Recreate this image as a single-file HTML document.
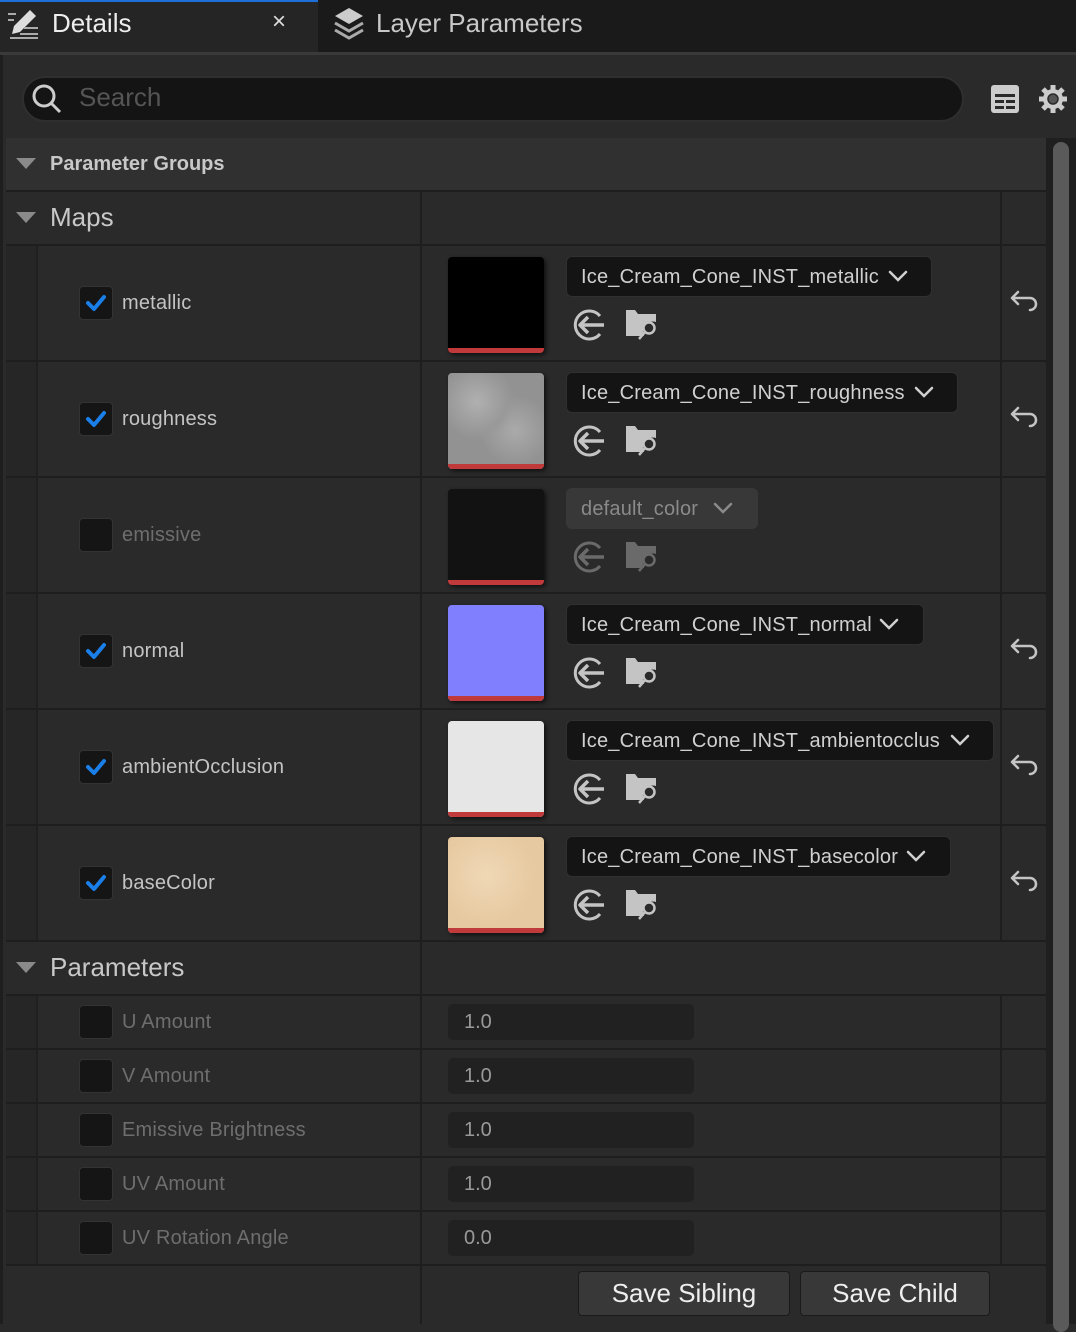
<!DOCTYPE html>
<html><head><meta charset="utf-8"><style>
*{margin:0;padding:0;box-sizing:border-box}
body{width:1076px;height:1324px;background:#2a2a2a;font-family:"Liberation Sans",sans-serif;color:#c0c0c0;position:relative;overflow:hidden}
.a{position:absolute}
.ind{position:absolute;left:6px;width:30px;background:#262626}
.cb{position:absolute;left:79px;width:34px;height:34px;background:#151515;border:1px solid #333;border-radius:4px}
.lbl{position:absolute;left:122px;font-size:20px;color:#c4c4c4;letter-spacing:0.2px}
.dim{color:#6e6e6e}
.th{position:absolute;left:448px;width:96px;height:96px;border-radius:4px;overflow:hidden;box-shadow:2px 2px 4px #111}
.th:after{content:"";position:absolute;left:0;right:0;bottom:0;height:5px;background:#c0393b}
.dd{position:absolute;left:566px;height:41px;background:#141414;border:1px solid #303030;border-radius:6px;font-size:20px;padding:9px 0 0 14px;color:#d0d0d0;white-space:nowrap;overflow:hidden;letter-spacing:0.2px}
.hl{position:absolute;height:2px;left:6px;width:1040px;background:#1e1e1e}
.num{position:absolute;left:448px;width:246px;height:36px;background:#212121;border-radius:5px;font-size:20px;color:#9a9a9a;padding:7px 0 0 16px}
.btn{position:absolute;top:1271px;height:45px;background:#383838;border:1px solid #1a1a1a;border-radius:4px;font-size:26px;color:#eee;text-align:center;padding-top:6px}
</style></head><body>
<div class="a" style="left:0;top:0;width:1076px;height:52px;background:#1a1a1a"></div>
<div class="a" style="left:0;top:0;width:318px;height:52px;background:#252525;border-top:2px solid #1e6fd9"></div>
<svg class="a" style="left:6px;top:6px" width="36" height="34" viewBox="0 0 36 34"><path d="M6 28 L8 20 L24 4 L30 10 L14 26 Z" fill="#ddd"/><path d="M2 8h8M2 14h6M18 22h14M14 28h18M4 32h28" stroke="#aaa" stroke-width="2"/></svg>
<div class="a" style="left:52px;top:8px;font-size:26px;color:#eee">Details</div>
<div class="a" style="left:272px;top:8px;font-size:24px;color:#ddd">×</div>
<svg class="a" style="left:332px;top:6px" width="34" height="34" viewBox="0 0 34 34"><path d="M17 2 L31 10 L17 18 L3 10 Z" fill="#ccc"/><path d="M3 17 L17 25 L31 17 M3 24 L17 32 L31 24" stroke="#aaa" stroke-width="3" fill="none"/></svg>
<div class="a" style="left:376px;top:8px;font-size:26px;color:#c8c8c8">Layer Parameters</div>
<div class="a" style="left:0;top:52px;width:1076px;height:3px;background:#3a3a3a"></div>
<div class="a" style="left:0;top:55px;width:3px;height:1269px;background:#1e1e1e"></div>
<div class="a" style="left:22px;top:76px;width:942px;height:46px;background:#141414;border:2px solid #2f2f2f;border-radius:23px"></div>
<svg class="a" style="left:30px;top:82px" width="34" height="34" viewBox="0 0 34 34"><circle cx="14" cy="14" r="10" stroke="#ccc" stroke-width="3" fill="none"/><path d="M21 21 L30 30" stroke="#ccc" stroke-width="3"/></svg>
<div class="a" style="left:79px;top:82px;font-size:26px;color:#555">Search</div>
<svg class="a" style="left:990px;top:84px" width="30" height="30" viewBox="0 0 30 30"><rect x="1" y="1" width="28" height="28" rx="3" fill="#ccc"/><rect x="5" y="10" width="20" height="3" fill="#2a2a2a"/><rect x="5" y="16" width="9" height="3" fill="#2a2a2a"/><rect x="16" y="16" width="9" height="3" fill="#2a2a2a"/><rect x="5" y="22" width="9" height="3" fill="#2a2a2a"/><rect x="16" y="22" width="9" height="3" fill="#2a2a2a"/></svg>
<svg class="a" style="left:1037px;top:83px" width="32" height="32" viewBox="0 0 32 32"><g stroke="#ccc" stroke-width="5"><path d="M16 2v28M2 16h28M6 6l20 20M26 6L6 26"/></g><circle cx="16" cy="16" r="10" fill="#ccc"/><circle cx="16" cy="16" r="5" fill="#555" stroke="#2a2a2a" stroke-width="1.5"/></svg>
<div class="a" style="left:1046px;top:138px;width:30px;height:1186px;background:#1f1f1f"></div>
<div class="a" style="left:1053px;top:142px;width:16px;height:1190px;background:#5a5a5a;border-radius:8px"></div>
<div class="a" style="left:6px;top:138px;width:1040px;height:52px;background:#303030"></div>
<div class="a" style="left:16px;top:158px;width:0;height:0;border-left:10px solid transparent;border-right:10px solid transparent;border-top:11px solid #8a8a8a"></div>
<div class="a" style="left:50px;top:153px;font-size:20px;font-weight:bold;color:#c8c8c8">Parameter Groups</div>
<div class="hl" style="top:190px"></div>
<div class="a" style="left:16px;top:212px;width:0;height:0;border-left:10px solid transparent;border-right:10px solid transparent;border-top:11px solid #8a8a8a"></div>
<div class="a" style="left:50px;top:202px;font-size:26px;color:#c8c8c8">Maps</div>
<div class="hl" style="top:244px"></div>
<div class="a" style="left:420px;top:192px;width:2px;height:1132px;background:#1e1e1e"></div>
<div class="a" style="left:1000px;top:192px;width:2px;height:750px;background:#1e1e1e"></div>
<div class="a" style="left:1000px;top:996px;width:2px;height:270px;background:#1e1e1e"></div>
<div class="ind" style="top:246px;height:694px"></div>
<div class="a" style="left:36px;top:246px;width:2px;height:694px;background:#202020"></div>
<div class="hl" style="top:360px"></div><div class="hl" style="top:476px"></div><div class="hl" style="top:592px"></div><div class="hl" style="top:708px"></div><div class="hl" style="top:824px"></div><div class="hl" style="top:940px"></div>

<div class="cb" style="top:286px"><svg width="32" height="32" viewBox="0 0 32 32"><path d="M8 16 L14 22 L24 10" stroke="#1a7fe8" stroke-width="4" fill="none" stroke-linecap="round" stroke-linejoin="round"/></svg></div>
<div class="lbl" style="top:292px">metallic</div>
<div class="cb" style="top:402px"><svg width="32" height="32" viewBox="0 0 32 32"><path d="M8 16 L14 22 L24 10" stroke="#1a7fe8" stroke-width="4" fill="none" stroke-linecap="round" stroke-linejoin="round"/></svg></div>
<div class="lbl" style="top:408px">roughness</div>
<div class="cb" style="top:518px"></div>
<div class="lbl dim" style="top:524px">emissive</div>
<div class="cb" style="top:634px"><svg width="32" height="32" viewBox="0 0 32 32"><path d="M8 16 L14 22 L24 10" stroke="#1a7fe8" stroke-width="4" fill="none" stroke-linecap="round" stroke-linejoin="round"/></svg></div>
<div class="lbl" style="top:640px">normal</div>
<div class="cb" style="top:750px"><svg width="32" height="32" viewBox="0 0 32 32"><path d="M8 16 L14 22 L24 10" stroke="#1a7fe8" stroke-width="4" fill="none" stroke-linecap="round" stroke-linejoin="round"/></svg></div>
<div class="lbl" style="top:756px">ambientOcclusion</div>
<div class="cb" style="top:866px"><svg width="32" height="32" viewBox="0 0 32 32"><path d="M8 16 L14 22 L24 10" stroke="#1a7fe8" stroke-width="4" fill="none" stroke-linecap="round" stroke-linejoin="round"/></svg></div>
<div class="lbl" style="top:872px">baseColor</div>

<div class="th" style="top:257px;background:#000"></div>
<div class="th" style="top:373px;background:radial-gradient(circle at 30% 30%,#b0b0b0,#999 30%,transparent 40%),radial-gradient(circle at 70% 60%,#aaa,#929292 40%),#999"></div>
<div class="th" style="top:489px;background:#121212"></div>
<div class="th" style="top:605px;background:#8080ff"></div>
<div class="th" style="top:721px;background:#e6e6e6"></div>
<div class="th" style="top:837px;background:radial-gradient(circle at 40% 40%,#f0d8b6,#e6c9a0 60%),#e8cda8"></div>

<div class="dd" style="top:256px;width:366px">Ice_Cream_Cone_INST_metallic</div>
<div class="dd" style="top:372px;width:392px">Ice_Cream_Cone_INST_roughness</div>
<div class="dd" style="top:488px;width:192px;background:#383838;border-color:#383838;color:#8a8a8a">default_color</div>
<div class="dd" style="top:604px;width:358px">Ice_Cream_Cone_INST_normal</div>
<div class="dd" style="top:720px;width:428px"><span style="display:inline-block;width:360px;overflow:hidden;vertical-align:top">Ice_Cream_Cone_INST_ambientocclusion</span></div>
<div class="dd" style="top:836px;width:385px">Ice_Cream_Cone_INST_basecolor</div>
<svg class="a" style="left:0;top:0" width="1076" height="1324" viewBox="0 0 1076 1324">
<g stroke="#d0d0d0" stroke-width="2.5" fill="none" stroke-linecap="round">
<path d="M890 272l8 8l8-8"/><path d="M916 388l8 8l8-8"/><path d="M881 620l8 8l8-8"/><path d="M952 736l8 8l8-8"/><path d="M908 852l8 8l8-8"/>
</g>
<path d="M715 504l8 8l8-8" stroke="#8a8a8a" stroke-width="2.5" fill="none" stroke-linecap="round"/>
<defs>
<g id="ic">
<path d="M600 316 A14 14 0 1 0 600 334" stroke-width="3" fill="none"/>
<path d="M604 325 H580 M588 317 L580 325 L588 333" stroke-width="3.5" fill="none" stroke-linejoin="round"/>
<path d="M626 310 h9 l3 4 h18 v8 a10 10 0 0 0 -12 14 h-18 z" stroke="none"/>
<circle cx="649" cy="328" r="5.5" stroke-width="2.5" fill="none"/>
<path d="M645 332 L639 339" stroke-width="2.5"/>
</g>
<g id="rs"><path d="M1030 310 a6 6 0 0 0 0 -12 h-17 M1018 292 l-6 6 l6 6" stroke-width="2.5" fill="none" stroke-linecap="round" stroke-linejoin="round"/></g>
</defs>
<g fill="#c4c4c4" stroke="#c4c4c4"><use href="#ic"/><use href="#ic" y="116"/><use href="#ic" y="348"/><use href="#ic" y="464"/><use href="#ic" y="580"/></g>
<g fill="#6a6a6a" stroke="#6a6a6a"><use href="#ic" y="232"/></g>
<g stroke="#c4c4c4" fill="none"><use href="#rs"/><use href="#rs" y="116"/><use href="#rs" y="348"/><use href="#rs" y="464"/><use href="#rs" y="580"/></g>
</svg>

<div class="a" style="left:16px;top:962px;width:0;height:0;border-left:10px solid transparent;border-right:10px solid transparent;border-top:11px solid #8a8a8a"></div>
<div class="a" style="left:50px;top:952px;font-size:26px;color:#c8c8c8">Parameters</div>
<div class="hl" style="top:994px"></div>
<div class="ind" style="top:996px;height:268px"></div>
<div class="a" style="left:36px;top:996px;width:2px;height:268px;background:#202020"></div>
<div class="hl" style="top:1048px"></div><div class="hl" style="top:1102px"></div><div class="hl" style="top:1156px"></div><div class="hl" style="top:1210px"></div><div class="hl" style="top:1264px"></div>
<div class="cb" style="top:1005px"></div><div class="lbl dim" style="top:1011px">U Amount</div><div class="num" style="top:1004px">1.0</div>
<div class="cb" style="top:1059px"></div><div class="lbl dim" style="top:1065px">V Amount</div><div class="num" style="top:1058px">1.0</div>
<div class="cb" style="top:1113px"></div><div class="lbl dim" style="top:1119px">Emissive Brightness</div><div class="num" style="top:1112px">1.0</div>
<div class="cb" style="top:1167px"></div><div class="lbl dim" style="top:1173px">UV Amount</div><div class="num" style="top:1166px">1.0</div>
<div class="cb" style="top:1221px"></div><div class="lbl dim" style="top:1227px">UV Rotation Angle</div><div class="num" style="top:1220px">0.0</div>
<div class="btn" style="left:578px;width:212px">Save Sibling</div>
<div class="btn" style="left:800px;width:190px">Save Child</div>
</body></html>
